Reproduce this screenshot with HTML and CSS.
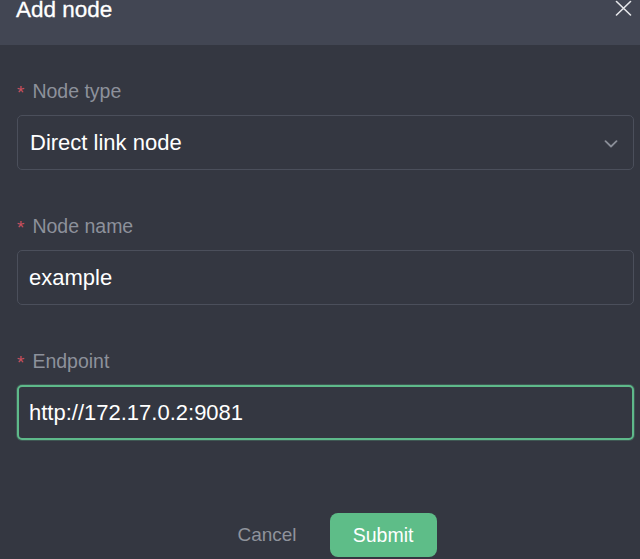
FILE: index.html
```html
<!DOCTYPE html>
<html lang="en">
<head>
<meta charset="utf-8">
<title>Add node</title>
<link rel="stylesheet" href="styles.css">
</head>
<body>
<div class="dialog">
  <header class="dialog-header">
    <h1 class="dialog-title">Add node</h1>
    <button class="close-btn" aria-label="Close">
      <svg width="17" height="16" viewBox="0 0 17 16" fill="none" stroke="currentColor" stroke-width="1.6" stroke-linecap="round">
        <path d="M1.5 1.5L15.5 15M15.5 1.5L1.5 15"/>
      </svg>
    </button>
  </header>
  <div class="dialog-body">
    <div class="form-item">
      <label class="form-label"><span class="req">*</span>Node type</label>
      <div class="field select">
        <span class="field-value">Direct link node</span>
        <svg class="chevron" width="14" height="8" viewBox="0 0 14 8" fill="none" stroke="currentColor" stroke-width="1.8" stroke-linecap="round" stroke-linejoin="round">
          <path d="M1.5 1.2L7 6.5L12.5 1.2"/>
        </svg>
      </div>
    </div>
    <div class="form-item">
      <label class="form-label"><span class="req">*</span>Node name</label>
      <div class="field">
        <span class="field-value">example</span>
      </div>
    </div>
    <div class="form-item">
      <label class="form-label"><span class="req">*</span>Endpoint</label>
      <div class="field focused">
        <span class="field-value">http://172.17.0.2:9081</span>
      </div>
    </div>
  </div>
  <footer class="dialog-footer">
    <button class="btn-cancel">Cancel</button>
    <button class="btn-submit">Submit</button>
  </footer>
</div>
</body>
</html>
```

FILE: styles.css
```css
* {
  box-sizing: border-box;
}

html, body {
  margin: 0;
  padding: 0;
  background: #343741;
  font-family: "Liberation Sans", Arial, sans-serif;
  overflow: hidden;
}

.dialog {
  width: 640px;
  height: 559px;
  background: #343741;
}

.dialog-header {
  height: 45px;
  background: #424653;
  display: flex;
  justify-content: space-between;
  align-items: flex-start;
  padding: 0 8px 0 16px;
}

.dialog-title {
  margin: 0;
  font-size: 22.5px;
  line-height: 19px;
  font-weight: 400;
  color: #ffffff;
  -webkit-text-stroke: 0.3px #ffffff;
}

.close-btn {
  background: none;
  border: none;
  padding: 0;
  color: #e6e7ea;
  display: flex;
}

.dialog-body {
  padding: 34px 6px 0 17px;
}

.form-item {
  margin-bottom: 44px;
}

.form-item:last-child {
  margin-bottom: 0;
}

.form-label {
  display: flex;
  align-items: center;
  height: 24px;
  line-height: 24px;
  font-size: 19.5px;
  color: #8d919b;
  margin-bottom: 12px;
}

.req {
  color: #c9505f;
  font-size: 19px;
  margin-right: 8px;
  position: relative;
  top: 2px;
}

.field {
  height: 55px;
  border: 1px solid #4b4f5b;
  border-radius: 5px;
  display: flex;
  align-items: center;
  padding: 0 11px 0 11px;
  background: #343741;
}

.field-value {
  font-size: 22px;
  color: #ffffff;
}

.select {
  justify-content: space-between;
  padding-left: 12px;
  padding-right: 15px;
}

.chevron {
  color: #8a8e98;
  margin-top: 3px;
}

.focused {
  border: 2px solid #5eb98a;
  box-shadow: 0 0 0 1px rgba(94, 185, 138, 0.25);
  padding-left: 10px;
}

.dialog-footer {
  display: flex;
  justify-content: center;
  align-items: center;
  gap: 33px;
  padding-left: 34px;
  margin-top: 73px;
}

.btn-cancel {
  background: none;
  border: none;
  padding: 0;
  font-family: inherit;
  font-size: 19px;
  color: #8f939c;
}

.btn-submit {
  width: 107px;
  height: 44px;
  background: #5ebd88;
  border: none;
  border-radius: 8px;
  font-family: inherit;
  font-size: 19.5px;
  color: #ffffff;
}
```
